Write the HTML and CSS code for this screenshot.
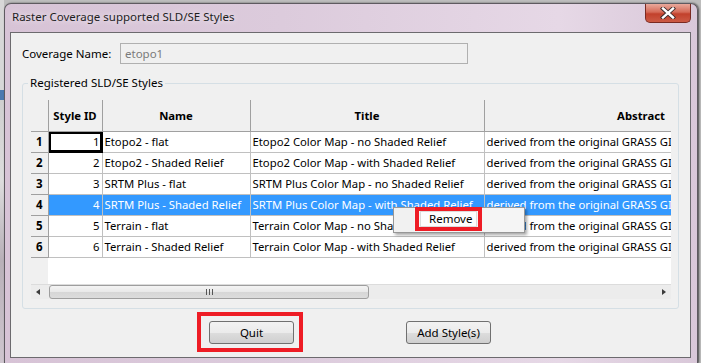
FILE: index.html
```html
<!DOCTYPE html>
<html lang="en">
  <head>
    <meta charset="UTF-8" />
    <title>Raster Coverage supported SLD/SE Styles</title>
    <link rel="stylesheet" href="styles.css">
  </head>
  <body>
    <div class="backdrop"></div>
    <div class="window">
      <div class="titlebar">
        <span class="title">Raster Coverage supported SLD/SE Styles</span>
        <button class="close" aria-label="Close">
          <svg width="16" height="12" viewBox="0 0 16 12">
            <path d="M3 1.5l10 9m0-9l-10 9" stroke="#3a2a2a" stroke-width="4.2" stroke-linecap="square"></path>
            <path d="M3 1.5l10 9m0-9l-10 9" stroke="#fff" stroke-width="2.4" stroke-linecap="square"></path>
          </svg>
        </button>
      </div>

      <div class="client">
        <div class="name-row">
          <label>Coverage Name:</label>
          <div class="field">etopo1</div>
        </div>

        <fieldset class="group">
          <legend>Registered SLD/SE Styles</legend>
          <div class="grid-wrap">
            <div class="grid">
              <table>
                <colgroup>
                  <col class="c-row">
                  <col class="c-id">
                  <col class="c-name">
                  <col class="c-title">
                  <col class="c-abs">
                </colgroup>
                <thead>
                  <tr>
                    <th></th>
                    <th>Style ID</th>
                    <th>Name</th>
                    <th>Title</th>
                    <th>Abstract</th>
                  </tr>
                </thead>
                <tbody>
                  <tr>
                    <th>1</th>
                    <td class="num focus">1</td>
                    <td>Etopo2 - flat</td>
                    <td>Etopo2 Color Map - no Shaded Relief</td>
                    <td>derived from the original GRASS GIS color map</td>
                  </tr>
                  <tr>
                    <th>2</th>
                    <td class="num">2</td>
                    <td>Etopo2 - Shaded Relief</td>
                    <td>Etopo2 Color Map - with Shaded Relief</td>
                    <td>derived from the original GRASS GIS color map</td>
                  </tr>
                  <tr>
                    <th>3</th>
                    <td class="num">3</td>
                    <td>SRTM Plus - flat</td>
                    <td>SRTM Plus Color Map - no Shaded Relief</td>
                    <td>derived from the original GRASS GIS color map</td>
                  </tr>
                  <tr class="selected">
                    <th>4</th>
                    <td class="num">4</td>
                    <td>SRTM Plus - Shaded Relief</td>
                    <td>SRTM Plus Color Map - with Shaded Relief</td>
                    <td>derived from the original GRASS GIS color map</td>
                  </tr>
                  <tr>
                    <th>5</th>
                    <td class="num">5</td>
                    <td>Terrain - flat</td>
                    <td>Terrain Color Map - no Shaded Relief</td>
                    <td>derived from the original GRASS GIS color map</td>
                  </tr>
                  <tr>
                    <th>6</th>
                    <td class="num">6</td>
                    <td>Terrain - Shaded Relief</td>
                    <td>Terrain Color Map - with Shaded Relief</td>
                    <td>derived from the original GRASS GIS color map</td>
                  </tr>
                </tbody>
              </table>
            </div>

            <div class="hscroll">
              <span class="arrow left"></span>
              <div class="track">
                <div class="thumb"><span class="grip"></span></div>
              </div>
              <span class="arrow right"></span>
            </div>

            <div class="menu">
              <div class="menu-mark">
                <div class="menu-item">Remove</div>
              </div>
            </div>
          </div>
        </fieldset>

        <div class="buttons">
          <div class="mark">
            <button class="btn">Quit</button>
          </div>
          <button class="btn">Add Style(s)</button>
        </div>
      </div>
    </div>
  </body>
</html>
```

FILE: styles.css
```css
*,
*::before,
*::after {
  box-sizing: border-box;
}

html,
body {
  margin: 0;
  height: 100%;
}

body {
  position: relative;
  overflow: hidden;
  padding: 3px 3px 0 4px;
  background: linear-gradient(to right, #8c8c8c 0, #8c8c8c 4px, #bdbdbd 4px);
  font-family: "Noto Sans", sans-serif;
  font-size: 11.3px;
  color: #000;
}

.backdrop {
  position: absolute;
  left: 0;
  top: 0;
  width: 4px;
  height: 100%;
  background: linear-gradient(to bottom, #d7d7d7 0, #d7d7d7 90px, #4a78b0 90px, #4a78b0 100px, #cfcfcf 100px, #ddd 180px, #b8b0b8 260px, #cfc6cf 363px);
}

.window {
  position: relative;
  height: 360px;
  border: 1px solid #5e5a60;
  border-bottom: 0;
  border-radius: 7px 7px 0 0;
  background: linear-gradient(to right, #d7c3d6 0%, #dccbdc 40%, #e6d8e6 80%, #d9c8d9 100%);
  box-shadow: 1px 0 2px rgba(0, 0, 0, 0.6);
}

.titlebar {
  display: flex;
  align-items: flex-start;
  justify-content: space-between;
  height: 28px;
  padding: 0 6px 0 7px;
}

.title {
  margin-top: 5px;
  font-size: 11.5px;
  color: #1e1e1e;
  text-shadow: 0 0 6px rgba(255, 255, 255, 0.9);
}

.close {
  display: flex;
  align-items: center;
  justify-content: center;
  width: 46px;
  height: 19px;
  padding: 0;
  border: 1px solid #7a2a22;
  border-top: 0;
  border-radius: 0 0 5px 5px;
  background: linear-gradient(to bottom, #e9a99c 0%, #d56a57 45%, #c2412c 55%, #cc5a45 100%);
}

.client {
  display: flex;
  flex-direction: column;
  height: 326px;
  margin: 0 6px 0 5px;
  border: 1px solid #6c6a6e;
  background: #f0f0f0;
  padding: 10px 11px 0 11px;
}

.name-row {
  display: flex;
  align-items: center;
  height: 21px;
}

.name-row label {
  width: 98px;
  font-size: 11.5px;
}

.field {
  width: 348px;
  height: 21px;
  padding: 2px 0 0 4px;
  border: 1px solid #b0b0b0;
  background: #f0f0f0;
  color: #7a7a7a;
  font-size: 11.5px;
}

.group {
  margin: 13px 0 0 0;
  padding: 11px 8px 9px 8px;
  border: 1px solid #d5dfe5;
  border-radius: 3px;
  min-width: 0;
}

.group legend {
  margin-left: -3px;
  padding: 0 2px;
  font-size: 11.5px;
  line-height: 12px;
}

.grid-wrap {
  position: relative;
  width: 640px;
}

.grid {
  height: 184px;
  overflow: hidden;
  background: #fff;
  background-image: linear-gradient(to right, #f0f0f0 0, #f0f0f0 17px, #fff 17px);
}

table {
  width: 767px;
  table-layout: fixed;
  border-collapse: collapse;
}

.c-row { width: 17px; }
.c-id { width: 54px; }
.c-name { width: 148px; }
.c-title { width: 234px; }
.c-abs { width: 314px; }

thead th {
  height: 31px;
  background: #f0f0f0;
  border: 1px solid #a0a0a0;
  border-top: 0;
  font-weight: bold;
  text-align: center;
  padding: 0;
}

thead th:first-child {
  border-left: 0;
}

tbody th {
  height: 21px;
  background: #f0f0f0;
  border: 1px solid #a0a0a0;
  border-left: 0;
  font-weight: bold;
  text-align: center;
  padding: 0;
  font-size: 11.5px;
}

td {
  height: 21px;
  padding: 0 2px;
  border: 1px solid #c0c0c0;
  white-space: nowrap;
  overflow: hidden;
}

td.num {
  text-align: right;
}

td.focus {
  box-shadow: inset 0 0 0 2px #000;
  border-color: #000;
}

tr.selected td {
  background: #3399ff;
  color: #fff;
}

.hscroll {
  display: flex;
  height: 15px;
  background: #ececec;
  border-top: 1px solid #dcdcdc;
}

.arrow {
  width: 17px;
  position: relative;
}

.arrow::after {
  content: "";
  position: absolute;
  top: 4px;
  border: 3.5px solid transparent;
}

.arrow.left::after {
  left: 5px;
  border-right: 4px solid #3c3c3c;
  border-left: 0;
}

.arrow.right::after {
  left: 8px;
  border-left: 4px solid #3c3c3c;
  border-right: 0;
}

.track {
  flex: 1;
  padding: 0 1px;
}

.thumb {
  display: flex;
  align-items: center;
  justify-content: center;
  width: 320px;
  height: 14px;
  border: 1px solid #9e9e9e;
  border-radius: 3px;
  background: linear-gradient(to bottom, #f4f4f4 0%, #e8e8e8 50%, #d6d6d6 51%, #dcdcdc 100%);
}

.grip {
  width: 7px;
  height: 6px;
  border-left: 1px solid #555;
  border-right: 1px solid #555;
  background: linear-gradient(to right, transparent 2px, #555 2px, #555 3px, transparent 3px);
}

.menu {
  position: absolute;
  left: 362px;
  top: 107px;
  width: 132px;
  height: 26px;
  padding-left: 21px;
  border: 1px solid #979797;
  background: linear-gradient(to right, #f1f1f1 0, #f1f1f1 20px, #f5f5f5 20px);
  box-shadow: 2px 2px 3px rgba(0, 0, 0, 0.35);
}

.menu-mark {
  width: 67px;
  height: 24px;
  margin-top: -1px;
  border: 4px solid #ee1c25;
  padding: 0 1px;
}

.menu-item {
  height: 16px;
  border: 1px solid #dcdcdc;
  background: #fdfdfd;
  line-height: 14px;
  padding-left: 8px;
  font-size: 11.5px;
}

.buttons {
  display: flex;
  align-items: center;
  margin-top: 3px;
  padding-left: 175px;
}

.mark {
  padding: 5px 5px 4px 8px;
  border: 4px solid #ee1c25;
  margin-right: 103px;
}

.btn {
  width: 85px;
  height: 23px;
  padding: 0;
  border: 1px solid #707070;
  border-radius: 3px;
  background: linear-gradient(to bottom, #f2f2f2 0%, #ebebeb 50%, #dddddd 51%, #cfcfcf 100%);
  font-family: "Noto Sans", sans-serif;
  font-size: 11.5px;
  color: #000;
}

.mark .btn {
  display: block;
}
```
